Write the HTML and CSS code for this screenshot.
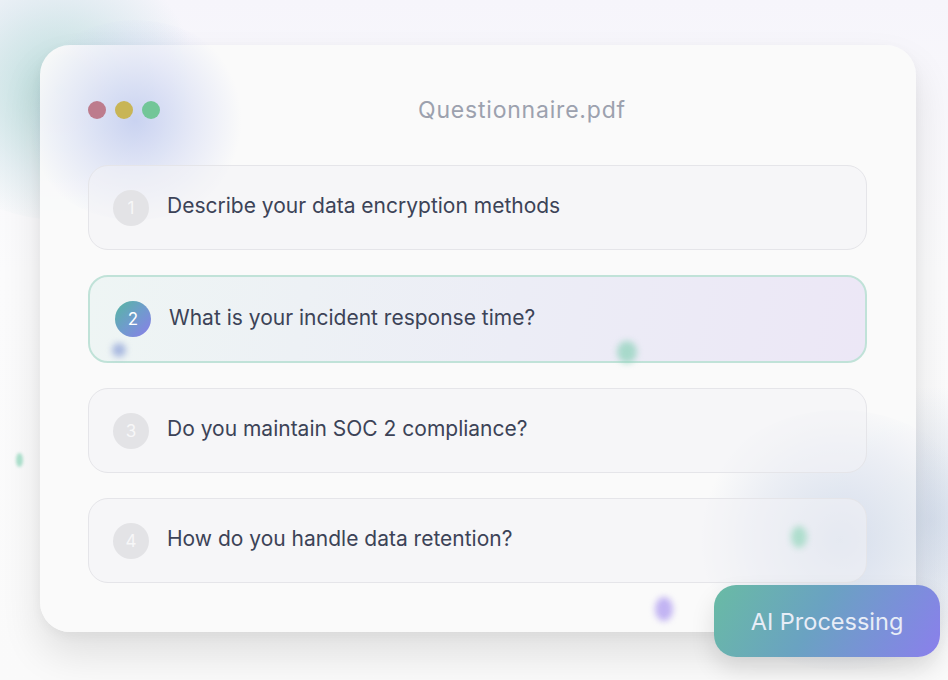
FILE: index.html
```html
<!DOCTYPE html>
<html>
<head>
<meta charset="utf-8">
<link rel="stylesheet" href="styles.css">
</head>
<body>
<div class="stage">
  <div class="blob blob-teal"></div>
  <div class="blob blob-right"></div>
  <div class="card">
    <div class="blob blob-blue"></div>
    <div class="blob blob-br"></div>
    <div class="header">
      <div class="dots">
        <span class="dot dot-red"></span>
        <span class="dot dot-yellow"></span>
        <span class="dot dot-green"></span>
      </div>
      <div class="title">Questionnaire.pdf</div>
    </div>
    <div class="rows">
      <div class="row"><span class="num">1</span><span class="q">Describe your data encryption methods</span></div>
      <div class="row row-active"><span class="num num-active">2</span><span class="q">What is your incident response time?</span></div>
      <div class="row"><span class="num">3</span><span class="q">Do you maintain SOC 2 compliance?</span></div>
      <div class="row"><span class="num">4</span><span class="q">How do you handle data retention?</span></div>
    </div>
  </div>
  <div class="spark s1"></div>
  <div class="spark s2"></div>
  <div class="spark s3"></div>
  <div class="spark s4"></div>
  <div class="spark s5"></div>
  <div class="badge">AI Processing</div>
</div>
</body>
</html>
```
FILE: styles.css
```css
html, body {
  margin: 0;
  padding: 0;
}
body {
  width: 948px;
  height: 680px;
  overflow: hidden;
  background: #f8f8fb;
  font-family: Inter, "Noto Sans", sans-serif;
}
.stage {
  position: relative;
  width: 948px;
  height: 680px;
  overflow: hidden;
  padding: 45px 0 0 40px;
  box-sizing: border-box;
  background: linear-gradient(180deg, #f6f5fb 0%, #fbfbfc 40%, #fafafa 100%);
}
.blob {
  position: absolute;
  border-radius: 50%;
  pointer-events: none;
}
.blob-teal {
  left: -90px;
  top: -40px;
  width: 300px;
  height: 260px;
  background: radial-gradient(circle, rgba(160,210,205,0.7) 0%, rgba(190,220,225,0.35) 45%, rgba(255,255,255,0) 70%);
}
.blob-right {
  left: 800px;
  top: 380px;
  width: 260px;
  height: 280px;
  background: radial-gradient(circle, rgba(190,205,225,0.55) 0%, rgba(205,215,230,0.28) 45%, rgba(255,255,255,0) 70%);
}
.blob-blue {
  left: -20px;
  top: -25px;
  width: 230px;
  height: 200px;
  z-index: 0;
  background: radial-gradient(circle, rgba(170,185,235,0.6) 0%, rgba(190,200,240,0.32) 40%, rgba(255,255,255,0) 70%);
}
.blob-br {
  left: 650px;
  top: 365px;
  width: 300px;
  height: 260px;
  z-index: 0;
  background: radial-gradient(circle, rgba(185,200,225,0.55) 0%, rgba(200,210,230,0.28) 45%, rgba(255,255,255,0) 70%);
}
.card {
  position: relative;
  z-index: 1;
  width: 876px;
  height: 587px;
  box-sizing: border-box;
  padding: 47px 49px 48px 48px;
  border-radius: 30px;
  background: rgba(250,250,250,0.93);
  box-shadow: 0 22px 40px rgba(0,0,0,0.11), 0 4px 12px rgba(0,0,0,0.04);
}
.header {
  position: relative;
  z-index: 3;
  display: flex;
  align-items: center;
  height: 36px;
}
.dots {
  display: flex;
  gap: 9px;
}
.dot {
  width: 18px;
  height: 18px;
  border-radius: 50%;
}
.dot-red { background: #bd7c8d; }
.dot-yellow { background: #c8b556; }
.dot-green { background: #72c698; }
.title {
  margin-left: 258px;
  font-size: 23px;
  color: #9ca1ae;
  letter-spacing: 0.8px;
}
.rows {
  position: relative;
  z-index: 3;
  display: flex;
  flex-direction: column;
  gap: 25px;
  margin-top: 37px;
}
.row {
  display: flex;
  align-items: center;
  gap: 18px;
  height: 85px;
  box-sizing: border-box;
  padding: 0 24px;
  border: 1px solid #e5e5e9;
  border-radius: 20px;
  background: rgba(242,242,245,0.55);
}
.row-active {
  height: 88px;
  padding: 0 25px;
  border: 2px solid #c0e2d8;
  background: linear-gradient(100deg, #eef5f4 0%, #ecedf6 55%, #ece7f6 100%);
}
.num {
  display: flex;
  align-items: center;
  justify-content: center;
  width: 36px;
  height: 36px;
  border-radius: 50%;
  background: #e3e3e6;
  color: #f7f7f8;
  font-size: 17px;
  flex-shrink: 0;
}
.num-active {
  background: linear-gradient(135deg, #55b7a0 0%, #6f9ccc 50%, #8a7de9 100%);
  color: #ffffff;
}
.q {
  font-size: 21px;
  color: #3c4357;
  margin-top: -4px;
}
.spark {
  position: absolute;
  border-radius: 50%;
  filter: blur(3px);
  z-index: 4;
}
.s1 { left: 112px; top: 343px; width: 14px; height: 14px; background: rgba(140,160,215,0.7); }
.s2 { left: 617px; top: 341px; width: 20px; height: 22px; background: rgba(140,210,185,0.7); }
.s3 { left: 16px; top: 453px; width: 7px; height: 14px; background: rgba(150,215,190,0.8); filter: blur(1.5px); }
.s4 { left: 791px; top: 526px; width: 16px; height: 22px; background: rgba(150,215,190,0.7); }
.s5 { left: 655px; top: 597px; width: 18px; height: 24px; background: rgba(170,150,240,0.7); }
.badge {
  position: absolute;
  z-index: 5;
  left: 714px;
  top: 585px;
  width: 226px;
  height: 72px;
  border-radius: 22px;
  display: flex;
  align-items: center;
  justify-content: center;
  background: linear-gradient(120deg, #69bba4 0%, #6aa2c2 45%, #7b8fda 75%, #8b7fec 100%);
  color: #e8edf7;
  font-size: 23.5px;
  box-shadow: 0 12px 24px rgba(0,0,0,0.12);
}
```
